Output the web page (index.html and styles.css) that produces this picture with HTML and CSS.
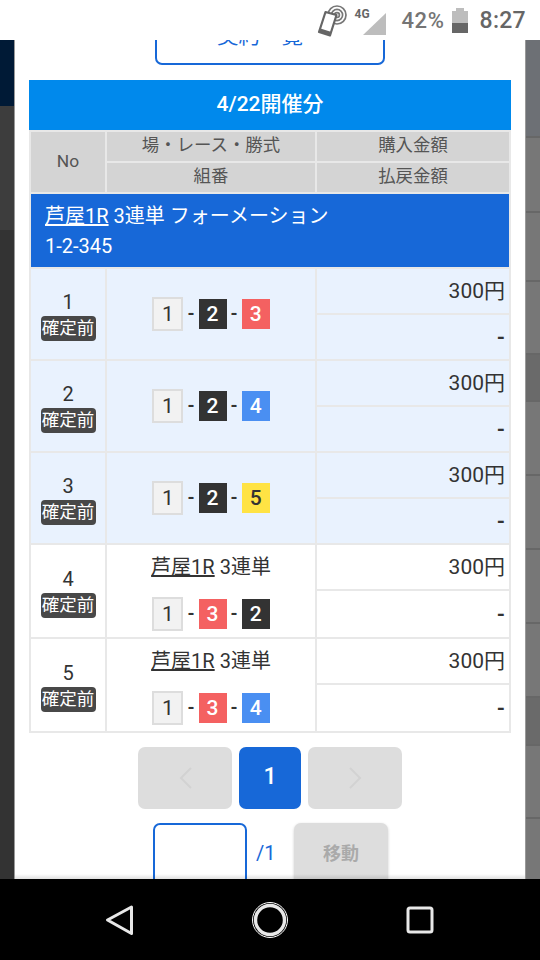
FILE: index.html
```html
<!DOCTYPE html>
<html lang="ja">

<head>
    <meta charset="UTF-8">
    <meta name="viewport" content="width=device-width, initial-scale=1.0">
    <title>4/22開催分</title>
    <link rel="stylesheet" href="styles.css">
</head>

<body>
    <div class="status-bar">
        <svg class="nfc-icon" width="32" height="36" viewBox="0 0 32 36">
            <circle cx="20" cy="12" r="9" fill="none" stroke="#777" stroke-width="1.7"/>
            <circle cx="20" cy="12" r="5.6" fill="none" stroke="#777" stroke-width="1.7"/>
            <circle cx="20" cy="12" r="2.4" fill="none" stroke="#777" stroke-width="1.7"/>
            <path d="M8.5 9 L19.5 12 L13 32.5 L2 29 Z" fill="#fff" stroke="#666" stroke-width="2.2" stroke-linejoin="round"/>
            <path d="M3.5 25.5 L14.5 29 L13 32.5 L2 29 Z" fill="#666"/>
        </svg>
        <div class="signal">
            <span class="signal-label">4G</span>
            <svg width="24" height="24" viewBox="0 0 24 24">
                <path d="M0 23 L23 1 V23 Z" fill="#bdbdbd"/>
            </svg>
        </div>
        <span class="battery-text">42%</span>
        <div class="battery">
            <div class="battery-cap"></div>
            <div class="battery-empty"></div>
            <div class="battery-full"></div>
        </div>
        <span class="clock">8:27</span>
    </div>

    <div class="main">
        <div class="side side-left">
            <div class="seg seg-navy"></div>
            <div class="seg seg-mid"></div>
            <div class="seg seg-dark"></div>
        </div>

        <div class="modal">
            <div class="top-button">契約一覧</div>
            <div class="day-title">4/22開催分</div>

            <table class="bets">
                <colgroup>
                    <col class="col-no">
                    <col class="col-race">
                    <col class="col-money">
                </colgroup>
                <tr class="head">
                    <th rowspan="2">No</th>
                    <th>場・レース・勝式</th>
                    <th>購入金額</th>
                </tr>
                <tr class="head">
                    <th>組番</th>
                    <th>払戻金額</th>
                </tr>
                <tr>
                    <td colspan="3" class="group"><u>芦屋1R</u> 3連単 フォーメーション<br>1-2-345</td>
                </tr>

                <tr class="tint">
                    <td rowspan="2" class="no">1<span class="badge">確定前</span></td>
                    <td rowspan="2" class="combo">
                        <div class="nums"><span class="n n1">1</span>-<span class="n n2">2</span>-<span class="n n3">3</span></div>
                    </td>
                    <td class="money">300円</td>
                </tr>
                <tr class="tint"><td class="money dash">-</td></tr>

                <tr class="tint">
                    <td rowspan="2" class="no">2<span class="badge">確定前</span></td>
                    <td rowspan="2" class="combo">
                        <div class="nums"><span class="n n1">1</span>-<span class="n n2">2</span>-<span class="n n4">4</span></div>
                    </td>
                    <td class="money">300円</td>
                </tr>
                <tr class="tint"><td class="money dash">-</td></tr>

                <tr class="tint">
                    <td rowspan="2" class="no">3<span class="badge">確定前</span></td>
                    <td rowspan="2" class="combo">
                        <div class="nums"><span class="n n1">1</span>-<span class="n n2">2</span>-<span class="n n5">5</span></div>
                    </td>
                    <td class="money">300円</td>
                </tr>
                <tr class="tint"><td class="money dash">-</td></tr>

                <tr>
                    <td rowspan="2" class="no">4<span class="badge">確定前</span></td>
                    <td rowspan="2" class="combo">
                        <div class="race-name"><u>芦屋1R</u> 3連単</div>
                        <div class="nums"><span class="n n1">1</span>-<span class="n n3">3</span>-<span class="n n2">2</span></div>
                    </td>
                    <td class="money">300円</td>
                </tr>
                <tr><td class="money dash tall">-</td></tr>

                <tr>
                    <td rowspan="2" class="no">5<span class="badge">確定前</span></td>
                    <td rowspan="2" class="combo">
                        <div class="race-name"><u>芦屋1R</u> 3連単</div>
                        <div class="nums"><span class="n n1">1</span>-<span class="n n3">3</span>-<span class="n n4">4</span></div>
                    </td>
                    <td class="money">300円</td>
                </tr>
                <tr><td class="money dash tall">-</td></tr>
            </table>

            <div class="pager">
                <div class="page-btn">
                    <svg width="13" height="22" viewBox="0 0 13 22"><path d="M12 1 L2 11 L12 21" fill="none" stroke="#d2d2d2" stroke-width="2"/></svg>
                </div>
                <div class="page-current">1</div>
                <div class="page-btn">
                    <svg width="13" height="22" viewBox="0 0 13 22"><path d="M1 1 L11 11 L1 21" fill="none" stroke="#d2d2d2" stroke-width="2"/></svg>
                </div>
            </div>

            <div class="jump">
                <div class="jump-input"></div>
                <span class="jump-total">/1</span>
                <div class="jump-btn">移動</div>
            </div>
        </div>

        <div class="side side-right">
            <div class="seg-r seg-r1"></div>
            <div class="seg-r seg-r2"></div>
            <div class="seg-r seg-r3"></div>
            <div class="seg-r seg-r4"></div>
            <div class="seg-r seg-r5"></div>
            <div class="seg-r seg-r6"></div>
            <div class="seg-r seg-r7"></div>
            <div class="seg-r seg-r8"></div>
            <div class="seg-r seg-r9"></div>
            <div class="seg-r seg-r10"></div>
            <div class="seg-r seg-r11"></div>
            <div class="seg-r seg-r12"></div>
        </div>
    </div>

    <div class="nav-bar">
        <svg width="30" height="32" viewBox="0 0 30 32">
            <path d="M27.5 3 L3.5 16 L27.5 29.5 Z" fill="none" stroke="#e8e8e8" stroke-width="3" stroke-linejoin="round"/>
        </svg>
        <svg width="38" height="38" viewBox="0 0 38 38">
            <circle cx="19" cy="19" r="17.5" fill="none" stroke="#fff" stroke-width="1"/>
            <circle cx="19" cy="19" r="14.5" fill="none" stroke="#e8e8e8" stroke-width="3.4"/>
        </svg>
        <svg width="28" height="28" viewBox="0 0 28 28">
            <rect x="2" y="2" width="24" height="24" rx="2" fill="none" stroke="#e8e8e8" stroke-width="3"/>
        </svg>
    </div>
</body>

</html>
```

FILE: styles.css
```css
* {
    box-sizing: border-box;
}

body {
    margin: 0;
    width: 540px;
    height: 960px;
    display: flex;
    flex-direction: column;
    overflow: hidden;
    font-family: Roboto, "Noto Sans CJK JP", sans-serif;
    color: #333;
    background: #fff;
}

/* status bar */
.status-bar {
    height: 40px;
    display: flex;
    align-items: center;
    justify-content: flex-end;
    padding-right: 14px;
    color: #757575;
    flex-shrink: 0;
}

.nfc-icon {
    margin-right: 6px;
    margin-top: 1px;
}

.signal {
    position: relative;
    width: 32px;
    height: 32px;
    margin-right: 15px;
    display: flex;
    align-items: flex-end;
    justify-content: flex-end;
}

.signal-label {
    position: absolute;
    left: 0;
    top: 4px;
    font-size: 12px;
    font-weight: 700;
    line-height: 12px;
    color: #666;
}

.battery-text {
    font-size: 22px;
    font-weight: 500;
    letter-spacing: 0.6px;
    margin-right: 7px;
}

.battery {
    width: 16px;
    height: 25px;
    margin-right: 12px;
    display: flex;
    flex-direction: column;
    align-items: center;
}

.battery-cap {
    width: 8px;
    height: 3px;
    background: #bdbdbd;
}

.battery-empty {
    width: 16px;
    height: 12px;
    background: #bdbdbd;
}

.battery-full {
    width: 16px;
    height: 10px;
    background: #666;
}

.clock {
    font-size: 23px;
    font-weight: 500;
    letter-spacing: 0.3px;
    color: #666;
}

/* page behind the modal */
.main {
    flex: 1;
    display: flex;
    min-height: 0;
}

.side {
    width: 15px;
    flex-shrink: 0;
    display: flex;
    flex-direction: column;
}

.side-left {
    border-right: 1px solid #999;
}

.side-right {
    border-left: 1px solid #999;
}

.seg-navy {
    height: 66px;
    background: #001a36;
}

.seg-mid {
    height: 124px;
    background: #3d3d3d;
}

.seg-dark {
    flex: 1;
    background: #333;
}

.seg-r {
    background: #777;
    border-bottom: 2px solid #676767;
}

.seg-r1 { height: 98px; background: #6d7075; }
.seg-r2 { height: 75px; }
.seg-r3 { height: 69px; }
.seg-r4 { height: 73px; }
.seg-r5 { height: 47px; background: #6a6a6a; }
.seg-r6 { height: 74px; }
.seg-r7 { height: 74px; }
.seg-r8 { height: 74px; }
.seg-r9 { height: 74px; }
.seg-r10 { height: 48px; background: #6a6a6a; }
.seg-r11 { height: 73px; }
.seg-r12 { flex: 1; border-bottom: 0; }

/* modal */
.modal {
    position: relative;
    width: 510px;
    flex-shrink: 0;
    background: #fff;
    padding: 0 14px;
    overflow: hidden;
}

.modal::after {
    content: "";
    position: absolute;
    left: 0;
    right: 0;
    bottom: 0;
    height: 5px;
    background: linear-gradient(rgba(0, 0, 0, 0), rgba(0, 0, 0, 0.12));
}

.top-button {
    width: 230px;
    height: 50px;
    margin: -25px auto 15px;
    padding-right: 20px;
    border: 2px solid #1768d8;
    border-radius: 7px;
    color: #1768d8;
    font-size: 21.5px;
    line-height: 37px;
    text-align: center;
    background: #fff;
}

.day-title {
    height: 50px;
    background: #0089ec;
    color: #fff;
    font-size: 21px;
    font-weight: 500;
    line-height: 48px;
    text-align: center;
}

/* table */
.bets {
    width: 482px;
    table-layout: fixed;
    border-collapse: collapse;
}

.col-no {
    width: 76px;
}

.col-race {
    width: 210px;
}

.bets th,
.bets td {
    border: 2px solid #e8e8e8;
    padding: 0;
    text-align: center;
}

.head th {
    height: 31px;
    padding-bottom: 3px;
    background: #d4d4d4;
    font-size: 17.4px;
    font-weight: 400;
    line-height: 26px;
    color: #555;
}

.bets td.group {
    height: 75px;
    padding: 6px 14px;
    background: #1768d8;
    border-color: #e8e8e8;
    color: #fff;
    font-size: 20px;
    line-height: 30px;
    text-align: left;
}

.tint td {
    background: #e9f2fe;
}

.bets td.no {
    padding-top: 2px;
    font-size: 20px;
    line-height: 24px;
    color: #333;
}

.badge {
    display: block;
    width: 55px;
    height: 25px;
    margin: 2px auto 0;
    border-radius: 4px;
    background: #484848;
    color: #fff;
    font-size: 17.5px;
    line-height: 24px;
    white-space: nowrap;
}

.combo {
    font-size: 20px;
}

.race-name {
    line-height: 30px;
    margin-bottom: 15px;
    color: #333;
}

.nums {
    display: flex;
    align-items: center;
    justify-content: center;
    gap: 4px;
    font-size: 18px;
    font-weight: 700;
    line-height: 30px;
}

.n {
    width: 28px;
    height: 30px;
    font-size: 21px;
    font-weight: 500;
    line-height: 30px;
    text-align: center;
}

.n1 {
    width: 31px;
    height: 34px;
    background: #f2f2f2;
    border: 2px solid #ddd;
    font-weight: 400;
    color: #333;
}

.n2 {
    background: #333;
    color: #fff;
}

.n3 {
    background: #f46161;
    color: #fff;
}

.n4 {
    background: #4a8ff2;
    color: #fff;
}

.n5 {
    background: #ffe344;
    color: #333;
}

.bets td.money {
    height: 46px;
    padding-right: 4px;
    font-size: 21px;
    line-height: 28px;
    text-align: right;
    color: #333;
}

.bets td.tall {
    height: 48px;
}

.bets td.dash {
    font-weight: 700;
}

/* pager */
.pager {
    display: flex;
    justify-content: center;
    gap: 7px;
    margin-top: 14px;
}

.page-btn {
    width: 94px;
    height: 62px;
    border-radius: 7px;
    background: #ddd;
    display: flex;
    align-items: center;
    justify-content: center;
}

.page-current {
    width: 62px;
    height: 62px;
    border-radius: 7px;
    background: #1768d8;
    color: #fff;
    font-size: 23px;
    font-weight: 500;
    line-height: 60px;
    text-align: center;
}

.jump {
    display: flex;
    margin-top: 14px;
    padding-left: 124px;
}

.jump-input {
    width: 94px;
    height: 62px;
    border: 2px solid #1768d8;
    border-radius: 7px;
    background: #fff;
}

.jump-total {
    width: 47px;
    padding-left: 9px;
    color: #1768d8;
    font-size: 20px;
    line-height: 60px;
}

.jump-btn {
    width: 94px;
    height: 62px;
    border-radius: 7px;
    background: #ddd;
    box-shadow: 0 1px 3px rgba(0, 0, 0, 0.2);
    color: #aaa;
    font-size: 18px;
    font-weight: 700;
    line-height: 62px;
    text-align: center;
}

/* android nav */
.nav-bar {
    height: 81px;
    flex-shrink: 0;
    background: #000;
    display: flex;
    align-items: center;
    padding-left: 104px;
}

.nav-bar svg:nth-child(1) {
    margin-right: 117px;
}

.nav-bar svg:nth-child(2) {
    margin-right: 117px;
}
```
